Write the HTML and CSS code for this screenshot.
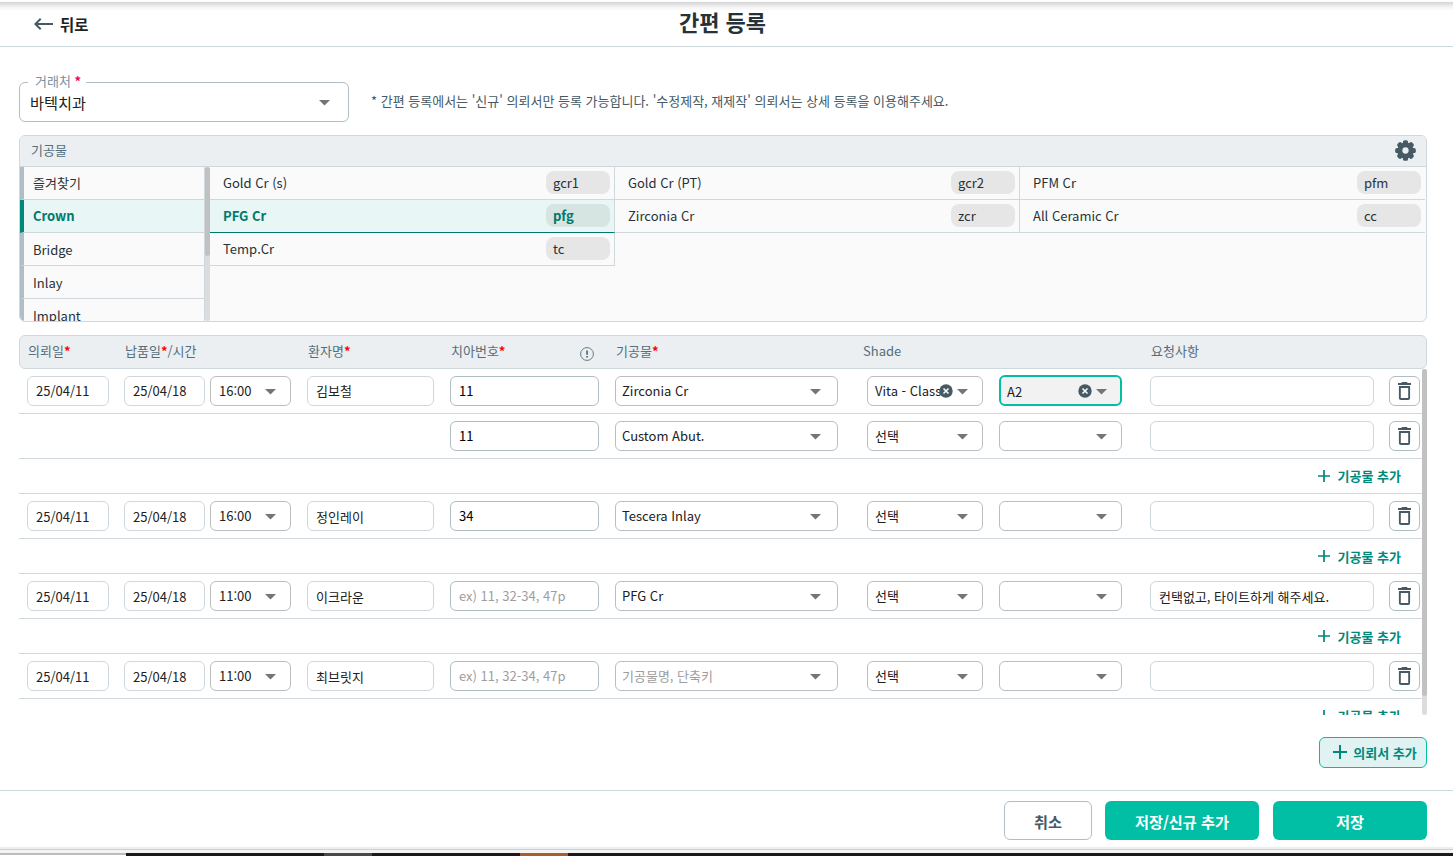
FILE: index.html
```html
<!DOCTYPE html>
<html lang="ko">
<head>
    <meta charset="UTF-8">
    <meta name="viewport" content="width=device-width, initial-scale=1.0">
    <title>간편 등록</title>
    <link rel="stylesheet" href="styles.css">
</head>
<body>
    <!-- Shared icons -->
    <svg class="sprite">
        <symbol id="i-down" viewBox="0 0 11 6"><path d="M0 0h11L5.5 5.5z"/></symbol>
        <symbol id="i-plus" viewBox="0 0 14 14"><path d="M6 0h2v6h6v2H8v6H6V8H0V6h6z"/></symbol>
        <symbol id="i-trash" viewBox="5 3 14 18" preserveAspectRatio="none"><path d="M6 19c0 1.1.9 2 2 2h8c1.1 0 2-.9 2-2V7H6v12zM8 9h8v10H8V9zm7.5-5l-1-1h-5l-1 1H5v2h14V4h-3.5z"/></symbol>
        <symbol id="i-clear" viewBox="0 0 14 14"><circle cx="7" cy="7" r="6.7"/><path d="M4.5 4.5l5 5M9.5 4.5l-5 5" stroke="#fff" stroke-width="1.5"/></symbol>
    </svg>

    <header class="topbar">
        <div class="back">
            <svg width="24" height="24" viewBox="0 0 24 24"><path d="M22 11H6.83l3.58-3.59L9 6l-6 6 6 6 1.41-1.41L6.83 13H22z"/></svg>
            <span>뒤로</span>
        </div>
        <h1>간편 등록</h1>
    </header>

    <main>
        <div class="client-row">
            <div class="client-select">
                <span class="client-label">거래처 <b>*</b></span>
                <span>바텍치과</span>
                <svg class="down"><use href="#i-down"/></svg>
            </div>
            <p class="notice">* 간편 등록에서는 '신규' 의뢰서만 등록 가능합니다. '수정제작, 재제작' 의뢰서는 상세 등록을 이용해주세요.</p>
        </div>

        <!-- Prosthesis picker -->
        <section class="picker">
            <div class="picker-head">
                <span>기공물</span>
                <svg class="gear" viewBox="-12 -12 24 24">
                    <circle r="9.2"/>
                    <rect x="-3" y="-11.8" width="6" height="23.6" rx="2.2"/>
                    <rect x="-3" y="-11.8" width="6" height="23.6" rx="2.2" transform="rotate(45)"/>
                    <rect x="-3" y="-11.8" width="6" height="23.6" rx="2.2" transform="rotate(90)"/>
                    <rect x="-3" y="-11.8" width="6" height="23.6" rx="2.2" transform="rotate(135)"/>
                    <circle class="hole" r="3.6"/>
                </svg>
            </div>
            <div class="picker-body">
                <ul class="categories">
                    <li>즐겨찾기</li>
                    <li class="active">Crown</li>
                    <li>Bridge</li>
                    <li>Inlay</li>
                    <li>Implant</li>
                </ul>
                <div class="scrollbar"><div class="thumb thumb-short"></div></div>
                <div class="products">
                    <div class="product"><span>Gold Cr (s)</span><span class="chip">gcr1</span></div>
                    <div class="product"><span>Gold Cr (PT)</span><span class="chip">gcr2</span></div>
                    <div class="product"><span>PFM Cr</span><span class="chip">pfm</span></div>
                    <div class="product active"><span>PFG Cr</span><span class="chip">pfg</span></div>
                    <div class="product"><span>Zirconia Cr</span><span class="chip">zcr</span></div>
                    <div class="product"><span>All Ceramic Cr</span><span class="chip">cc</span></div>
                    <div class="product"><span>Temp.Cr</span><span class="chip">tc</span></div>
                </div>
            </div>
        </section>

        <!-- Order table -->
        <section class="orders">
            <div class="orders-head cols">
                <span>의뢰일<b>*</b></span>
                <span>납품일<b>*</b>/시간</span>
                <span>환자명<b>*</b></span>
                <span class="tooth-head"><span>치아번호<b>*</b></span>
                    <svg width="14" height="14" viewBox="0 0 14 14"><circle cx="7" cy="7" r="6.4" fill="none" stroke="#607d8b"/><path d="M6.3 3.5h1.5v4.3H6.3zM6.3 9h1.5v1.5H6.3z"/></svg>
                </span>
                <span>기공물<b>*</b></span>
                <span class="shade-head">Shade</span>
                <span>요청사항</span>
            </div>
            <div class="orders-body">
                <div class="rows">
                    <div class="row cols">
                        <div class="field">25/04/11</div>
                        <div class="due">
                            <div class="field">25/04/18</div>
                            <div class="field select">16:00<svg class="down"><use href="#i-down"/></svg></div>
                        </div>
                        <div class="field name">김보철</div>
                        <div class="field tooth">11</div>
                        <div class="field select item">Zirconia Cr<svg class="down"><use href="#i-down"/></svg></div>
                        <div class="shade">
                            <div class="field select"><span class="cut">Vita - Classic</span><svg class="clear"><use href="#i-clear"/></svg><svg class="down"><use href="#i-down"/></svg></div>
                            <div class="field select focused">A2<svg class="clear"><use href="#i-clear"/></svg><svg class="down"><use href="#i-down"/></svg></div>
                        </div>
                        <div class="field memo"></div>
                        <div class="field delete"><svg><use href="#i-trash"/></svg></div>
                    </div>
                    <div class="row cols">
                        <div></div>
                        <div></div>
                        <div></div>
                        <div class="field tooth">11</div>
                        <div class="field select item">Custom Abut.<svg class="down"><use href="#i-down"/></svg></div>
                        <div class="shade">
                            <div class="field select">선택<svg class="down"><use href="#i-down"/></svg></div>
                            <div class="field select"><svg class="down"><use href="#i-down"/></svg></div>
                        </div>
                        <div class="field memo"></div>
                        <div class="field delete"><svg><use href="#i-trash"/></svg></div>
                    </div>
                    <div class="add-item"><svg><use href="#i-plus"/></svg>기공물 추가</div>

                    <div class="row cols lower">
                        <div class="field">25/04/11</div>
                        <div class="due">
                            <div class="field">25/04/18</div>
                            <div class="field select">16:00<svg class="down"><use href="#i-down"/></svg></div>
                        </div>
                        <div class="field name">정인레이</div>
                        <div class="field tooth">34</div>
                        <div class="field select item">Tescera Inlay<svg class="down"><use href="#i-down"/></svg></div>
                        <div class="shade">
                            <div class="field select">선택<svg class="down"><use href="#i-down"/></svg></div>
                            <div class="field select"><svg class="down"><use href="#i-down"/></svg></div>
                        </div>
                        <div class="field memo"></div>
                        <div class="field delete"><svg><use href="#i-trash"/></svg></div>
                    </div>
                    <div class="add-item lower"><svg><use href="#i-plus"/></svg><span>기공물 추가</span></div>

                    <div class="row cols lower">
                        <div class="field">25/04/11</div>
                        <div class="due">
                            <div class="field">25/04/18</div>
                            <div class="field select">11:00<svg class="down"><use href="#i-down"/></svg></div>
                        </div>
                        <div class="field name">이크라운</div>
                        <div class="field tooth placeholder">ex) 11, 32-34, 47p</div>
                        <div class="field select item">PFG Cr<svg class="down"><use href="#i-down"/></svg></div>
                        <div class="shade">
                            <div class="field select">선택<svg class="down"><use href="#i-down"/></svg></div>
                            <div class="field select"><svg class="down"><use href="#i-down"/></svg></div>
                        </div>
                        <div class="field memo">컨택없고, 타이트하게 해주세요.</div>
                        <div class="field delete"><svg><use href="#i-trash"/></svg></div>
                    </div>
                    <div class="add-item lower"><svg><use href="#i-plus"/></svg><span>기공물 추가</span></div>

                    <div class="row cols lower">
                        <div class="field">25/04/11</div>
                        <div class="due">
                            <div class="field">25/04/18</div>
                            <div class="field select">11:00<svg class="down"><use href="#i-down"/></svg></div>
                        </div>
                        <div class="field name">최브릿지</div>
                        <div class="field tooth placeholder">ex) 11, 32-34, 47p</div>
                        <div class="field select item placeholder">기공물명, 단축키<svg class="down"><use href="#i-down"/></svg></div>
                        <div class="shade">
                            <div class="field select">선택<svg class="down"><use href="#i-down"/></svg></div>
                            <div class="field select"><svg class="down"><use href="#i-down"/></svg></div>
                        </div>
                        <div class="field memo"></div>
                        <div class="field delete"><svg><use href="#i-trash"/></svg></div>
                    </div>
                    <div class="add-item"><svg><use href="#i-plus"/></svg>기공물 추가</div>
                </div>
                <div class="scrollbar"><div class="thumb thumb-long"></div></div>
            </div>
        </section>

        <button class="add-order"><svg><use href="#i-plus"/></svg>의뢰서 추가</button>
    </main>

    <footer class="actions">
        <button class="button-outline">취소</button>
        <button class="button-primary">저장/신규 추가</button>
        <button class="button-primary">저장</button>
    </footer>
    <div class="page-edge"></div>
    <div class="taskbar">
        <span class="task-light"></span>
        <span class="task-gray"></span>
        <span class="task-orange"></span>
    </div>
</body>
</html>
```
FILE: styles.css
```css
* {
    box-sizing: border-box;
}
body {
    margin: 0;
    height: 856px;
    overflow: hidden;
    display: flex;
    flex-direction: column;
    background-color: #fff;
    color: #263238;
    font-family: "Noto Sans CJK KR", "Noto Sans", sans-serif;
    font-size: 13px;
    line-height: 20px;
}
button {
    font-family: inherit;
    padding: 0;
}
svg {
    fill: #455a64;
    flex: none;
}
.sprite {
    display: none;
}
.down {
    width: 11px;
    height: 6px;
    fill: #757575;
    margin-left: auto;
    margin-top: 1px;
}

/* Header */
.topbar {
    height: 47px;
    padding-right: 8px;
    display: grid;
    grid-template-columns: 1fr auto 1fr;
    align-items: center;
    border-bottom: 1px solid #cfd8dc;
    border-top: 2px solid #fdfdfd;
    background: linear-gradient(#d4d4d4, #f3f3f3 5px, #fff 9px);
}
.back {
    display: flex;
    align-items: center;
    gap: 5px;
    padding-left: 31px;
    font-size: 15.4px;
    font-weight: 700;
    color: #212121;
}
h1 {
    margin: 0;
    font-size: 22px;
    line-height: 32px;
    padding-bottom: 7px;
    font-weight: 700;
}
main {
    width: 1408px;
    height: 743px;
    margin-left: 19px;
    padding-top: 35px;
    flex: none;
}

/* Client */
.client-row {
    display: flex;
    align-items: center;
    gap: 22px;
    height: 40px;
}
.client-select {
    position: relative;
    display: flex;
    align-items: center;
    width: 330px;
    height: 40px;
    padding: 0 18px 0 10px;
    border: 1px solid #b0bec5;
    border-radius: 6px;
    font-size: 15.2px;
    color: #212121;
}
.client-label {
    position: absolute;
    left: 8px;
    top: -12px;
    padding: 0 5px 0 7px;
    background-color: #fff;
    font-size: 13px;
    color: #78909c;
}
.client-label b {
    color: #f50057;
}
.notice {
    margin: 0;
    padding-bottom: 2px;
    color: #455a64;
}

/* Picker */
.picker {
    height: 187px;
    margin-top: 13px;
    border: 1px solid #cfd8dc;
    border-radius: 6px;
    background-color: #fafafa;
    overflow: hidden;
}
.picker-head {
    display: flex;
    justify-content: space-between;
    align-items: center;
    height: 31px;
    padding: 0 10px 2px 11px;
    border-bottom: 1px solid #cfd8dc;
    background-color: #eceff1;
    color: #546e7a;
}
.gear {
    width: 21px;
    height: 21px;
}
.hole {
    fill: #eceff1;
}
.picker-body {
    display: flex;
    height: 154px;
}
.categories {
    width: 185px;
    margin: 0;
    padding: 0;
    list-style: none;
    overflow: hidden;
    border-right: 1px solid #cfd8dc;
}
.categories li {
    height: 33px;
    padding-left: 9px;
    border-left: 4px solid #b0bec5;
    border-bottom: 1px solid #cfd8dc;
    line-height: 33px;
}
.categories li:first-child {
    line-height: 31px;
}
.categories .active {
    border-left-color: #00897b;
    background-color: #e8f6f5;
    color: #00796b;
    font-weight: 700;
    line-height: 31px;
}
.scrollbar {
    width: 5px;
    border-radius: 3px;
    background-color: #dcdcdc;
    flex: none;
}
.thumb {
    border-radius: 3px;
    background-color: #c1c1c1;
}
.thumb-short {
    height: 89px;
}
.thumb-long {
    height: 327px;
}
.products {
    display: grid;
    grid-template-columns: repeat(3, 405px);
    grid-auto-rows: 33px;
    align-content: start;
}
.product {
    display: flex;
    justify-content: space-between;
    align-items: center;
    padding: 0 4px 0 13px;
    border-right: 1px solid #cfd8dc;
    border-bottom: 1px solid #cfd8dc;
}
.product:nth-child(3n) {
    border-right: none;
}
.chip {
    width: 64px;
    height: 23px;
    margin-bottom: 1px;
    padding-left: 7px;
    border-radius: 8px;
    background-color: #e6e6e6;
    line-height: 23px;
}
.product.active {
    border-bottom-color: #00796b;
    background-color: #e8f6f5;
    color: #00796b;
    font-weight: 700;
}
.product.active .chip {
    background-color: #d6e5e2;
}

/* Orders */
.orders {
    margin-top: 13px;
}
.cols {
    display: grid;
    grid-template-columns: 97px 183px 143px 165px 252px 283px 239px 31px;
    align-items: center;
}
.orders-head {
    height: 34px;
    padding: 0 0 2px 8px;
    border: 1px solid #cfd8dc;
    border-radius: 6px;
    background-color: #eceff1;
    color: #546e7a;
}
.orders-head b {
    color: #f00;
}
.tooth-head {
    display: flex;
    justify-content: space-between;
    width: 143px;
}
.tooth-head svg {
    margin-top: 6px;
}
.shade-head {
    margin-left: -5px;
}
.orders-body {
    display: flex;
    height: 346px;
}
.rows {
    width: 1403px;
    overflow: hidden;
}
.row {
    height: 45px;
    padding-left: 8px;
    border-bottom: 1px solid #cfd8dc;
}
.field {
    display: flex;
    align-items: center;
    width: 82px;
    height: 30px;
    padding: 0 8px;
    border: 1px solid #cfd8dc;
    border-radius: 6px;
    color: #212121;
    white-space: nowrap;
}
.due {
    display: flex;
    gap: 5px;
}
.due .field {
    width: 81px;
}
.lower .field:not(.select, .tooth, .delete) {
    padding-top: 2px;
}
.name {
    width: 127px;
}
.field.tooth {
    width: 149px;
    border-color: #b0bec5;
    color: #000;
}
.select {
    position: relative;
    padding-right: 14px;
    border-color: #bdbdbd;
}
.field.item {
    width: 223px;
    padding: 0 16px 0 6px;
}
.field.placeholder {
    color: #9e9e9e;
}
.shade {
    display: flex;
    gap: 16px;
}
.shade .field {
    width: 116px;
    padding-left: 7px;
}
.shade .field:last-child {
    width: 123px;
}
.shade .focused {
    height: 31px;
    margin-top: -1px;
    border: 2px solid #00bfa5;
    background-color: #f2f2f2;
    padding: 2px 13px 0 6px;
}
.focused .down {
    margin-top: 0;
}
/* Clear icon sits over the end of a long value */
.clear {
    position: absolute;
    right: 29px;
    top: 7px;
    width: 14px;
    height: 14px;
}
.focused .clear {
    top: 7px;
    right: 28px;
}
.memo {
    width: 224px;
}
.field.delete {
    width: 31px;
    padding: 0 1px 0 0;
    justify-content: center;
    border-color: #b0bec5;
}
.delete svg {
    width: 13px;
    height: 18px;
}
.add-item {
    display: flex;
    justify-content: flex-end;
    align-items: center;
    gap: 8px;
    height: 35px;
    padding-right: 21px;
    border-bottom: 1px solid #cfd8dc;
    color: #00897b;
    font-weight: 700;
}
.add-item.lower span {
    padding-top: 1px;
}
.add-item svg {
    width: 12px;
    height: 12px;
    fill: #00897b;
}
.add-order {
    display: flex;
    justify-content: center;
    align-items: center;
    gap: 6px;
    width: 108px;
    height: 31px;
    margin: 22px 0 0 auto;
    padding: 0 0 1px 4px;
    border: 1px solid #00bfa5;
    border-radius: 6px;
    background-color: #e0f2f1;
    color: #00897b;
    font-size: 13px;
    font-weight: 700;
}
.add-order svg {
    width: 14px;
    height: 14px;
    fill: #00897b;
}

/* Footer */
.actions {
    display: flex;
    justify-content: flex-end;
    gap: 14px;
    height: 57px;
    padding: 10px 26px 0 0;
    border-top: 1px solid #cfd8dc;
    flex: none;
}
.actions button {
    height: 39px;
    border-radius: 6px;
    font-size: 15.2px;
    font-weight: 700;
}
.button-outline {
    width: 88px;
    margin-right: -1px;
    border: 1px solid #b0bec5;
    background-color: #fff;
    color: #455a64;
}
.button-primary {
    width: 154px;
    border: none;
    background-color: #00bfa5;
    color: #fff;
}
.page-edge {
    height: 6px;
    border-top: 2px solid #eceff1;
    background: linear-gradient(#cfcfcf 1px, #f4f4f4 1px);
    flex: none;
}
.taskbar {
    display: flex;
    height: 3px;
    background-color: #1b191b;
    flex: none;
}
.task-light {
    width: 126px;
    border-top: 2px solid #bdbdbd;
    background-color: #fff;
}
.task-gray {
    width: 48px;
    margin-left: 198px;
    background-color: #4a494a;
}
.task-orange {
    width: 48px;
    margin-left: 148px;
    background-color: #a85f2b;
}
```
